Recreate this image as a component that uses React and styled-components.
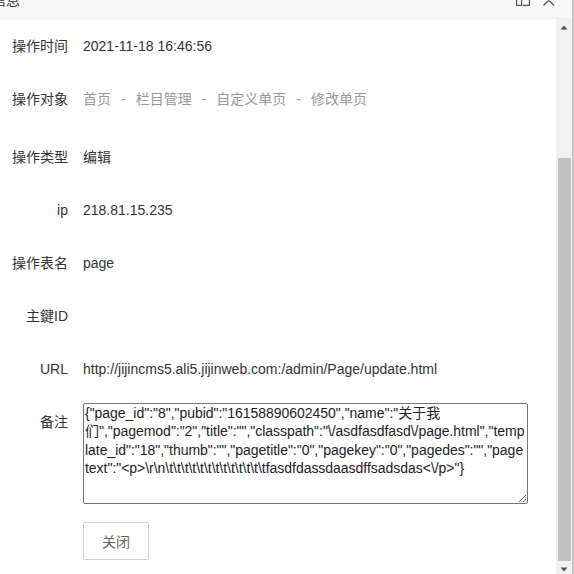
import React from 'react'
import styled, { createGlobalStyle } from 'styled-components'

const GlobalStyle = createGlobalStyle`
  html, body {
    margin: 0;
    padding: 0;
    overflow: hidden;
    background: #fff;
  }
  body {
    font-family: "Liberation Sans", "Noto Sans CJK SC", Arial, sans-serif;
    font-size: 14px;
    color: #333;
  }
`

const Dialog = styled.div`
  width: 572px;
  height: 580px;
  border-right: 2px solid #c4c4c4;
  background: #fff;
  display: flex;
  flex-direction: column;
  overflow: hidden;
`

const Header = styled.div`
  height: 42px;
  margin-top: -24px;
  flex: none;
  display: flex;
  align-items: center;
  justify-content: space-between;
  background: #f8f8f8;
  border-bottom: 1px solid #eee;
  padding: 0 16px 0 0;
`

const Title = styled.div`
  margin-left: -8px;
  margin-top: 4px;
  color: #333;
  font-size: 14px;
`

const HeaderTools = styled.div`
  display: flex;
  align-items: center;
  gap: 12px;
  margin-top: 4px;
`

const Body = styled.div`
  flex: 1;
  display: flex;
  min-height: 0;
`

const Content = styled.div`
  flex: 1;
  padding: 8px 28px 0 0;
`

const Row = styled.div`
  display: flex;
  align-items: ${p => (p.$top ? 'flex-start' : 'center')};
  min-height: 38px;
  margin-bottom: ${p => p.$gap || 15}px;
`

const Label = styled.div`
  width: 68px;
  padding-right: 15px;
  flex: none;
  text-align: right;
  line-height: 38px;
  color: #333;
`

const Value = styled.div`
  line-height: 38px;
  color: #333;
`

const Crumbs = styled.div`
  line-height: 38px;
  color: #999;
`

const Sep = styled.span`
  margin: 0 10px;
  color: #999;
`

const Note = styled.textarea`
  display: block;
  width: 445px;
  height: 101px;
  box-sizing: border-box;
  margin: 0;
  padding: 0 1px;
  border: 1px solid #767676;
  border-radius: 2px;
  font-family: "Liberation Sans", "Noto Sans CJK SC", Arial, sans-serif;
  font-size: 14px;
  line-height: 18.4px;
  letter-spacing: -0.03px;
  color: #222;
  resize: vertical;
  overflow: hidden;
  outline: none;
`

const Button = styled.button`
  margin-left: 83px;
  height: 38px;
  padding: 0 18px;
  border: 1px solid #d2d2d2;
  border-radius: 2px;
  background: #fff;
  color: #666;
  font-family: "Liberation Sans", "Noto Sans CJK SC", sans-serif;
  font-size: 14px;
  cursor: pointer;
`

const Scrollbar = styled.div`
  width: 16px;
  flex: none;
  background: #f1f1f1;
  display: flex;
  flex-direction: column;
`

const ArrowButton = styled.div`
  height: 17px;
  flex: none;
  display: flex;
  align-items: center;
  justify-content: center;
`

const Thumb = styled.div`
  margin: 0 1px 0 2px;
  background: #c1c1c1;
`

const MaxIcon = () => (
  <svg width="14" height="14" viewBox="0 0 14 14" fill="none" stroke="#555" strokeWidth="1.2">
    <rect x="0.6" y="6.6" width="5" height="6.8" />
    <path d="M7 13.4 H13.4 V3" />
  </svg>
)

const CloseIcon = () => (
  <svg width="14" height="14" viewBox="0 0 14 14" fill="none" stroke="#555" strokeWidth="1.4">
    <path d="M1.5 3 L12 13.5 M12 3 L1.5 13.5" />
  </svg>
)

const Triangle = ({ down }) => (
  <svg width="8" height="5" viewBox="0 0 8 5">
    <path d={down ? 'M0.5 0.5 H7.5 L4 4.5 Z' : 'M0.5 4.5 H7.5 L4 0.5 Z'} fill="#505050" />
  </svg>
)

const crumbs = ['首页', '栏目管理', '自定义单页', '修改单页']

const note =
  '{"page_id":"8","pubid":"16158890602450","name":"关于我们","pagemod":"2","title":"","classpath":"\\/asdfasdfasd\\/page.html","template_id":"18","thumb":"","pagetitle":"0","pagekey":"0","pagedes":"","pagetext":"<p>\\r\\n\\t\\t\\t\\t\\t\\t\\t\\t\\t\\t\\t\\t\\tfasdfdassdaasdffsadsdas<\\/p>"}'

export default function App() {
  return (
    <>
      <GlobalStyle />
      <Dialog>
        <Header>
          <Title>信息</Title>
          <HeaderTools>
            <MaxIcon />
            <CloseIcon />
          </HeaderTools>
        </Header>
        <Body>
          <Content>
            <Row>
              <Label>操作时间</Label>
              <Value>2021-11-18 16:46:56</Value>
            </Row>
            <Row $gap={20}>
              <Label>操作对象</Label>
              <Crumbs>
                {crumbs.map((c, i) => (
                  <React.Fragment key={c}>
                    {i > 0 && <Sep>-</Sep>}
                    {c}
                  </React.Fragment>
                ))}
              </Crumbs>
            </Row>
            <Row>
              <Label>操作类型</Label>
              <Value>编辑</Value>
            </Row>
            <Row>
              <Label>ip</Label>
              <Value>218.81.15.235</Value>
            </Row>
            <Row>
              <Label>操作表名</Label>
              <Value>page</Value>
            </Row>
            <Row>
              <Label>主鍵ID</Label>
              <Value></Value>
            </Row>
            <Row>
              <Label>URL</Label>
              <Value>http://jijincms5.ali5.jijinweb.com:/admin/Page/update.html</Value>
            </Row>
            <Row $top $gap={18}>
              <Label>备注</Label>
              <Note readOnly value={note} />
            </Row>
            <Button>关闭</Button>
          </Content>
          <Scrollbar>
            <ArrowButton>
              <Triangle />
            </ArrowButton>
            <div style={{ height: 122 }} />
            <Thumb style={{ height: 403 }} />
            <ArrowButton>
              <Triangle down />
            </ArrowButton>
          </Scrollbar>
        </Body>
      </Dialog>
    </>
  )
}
